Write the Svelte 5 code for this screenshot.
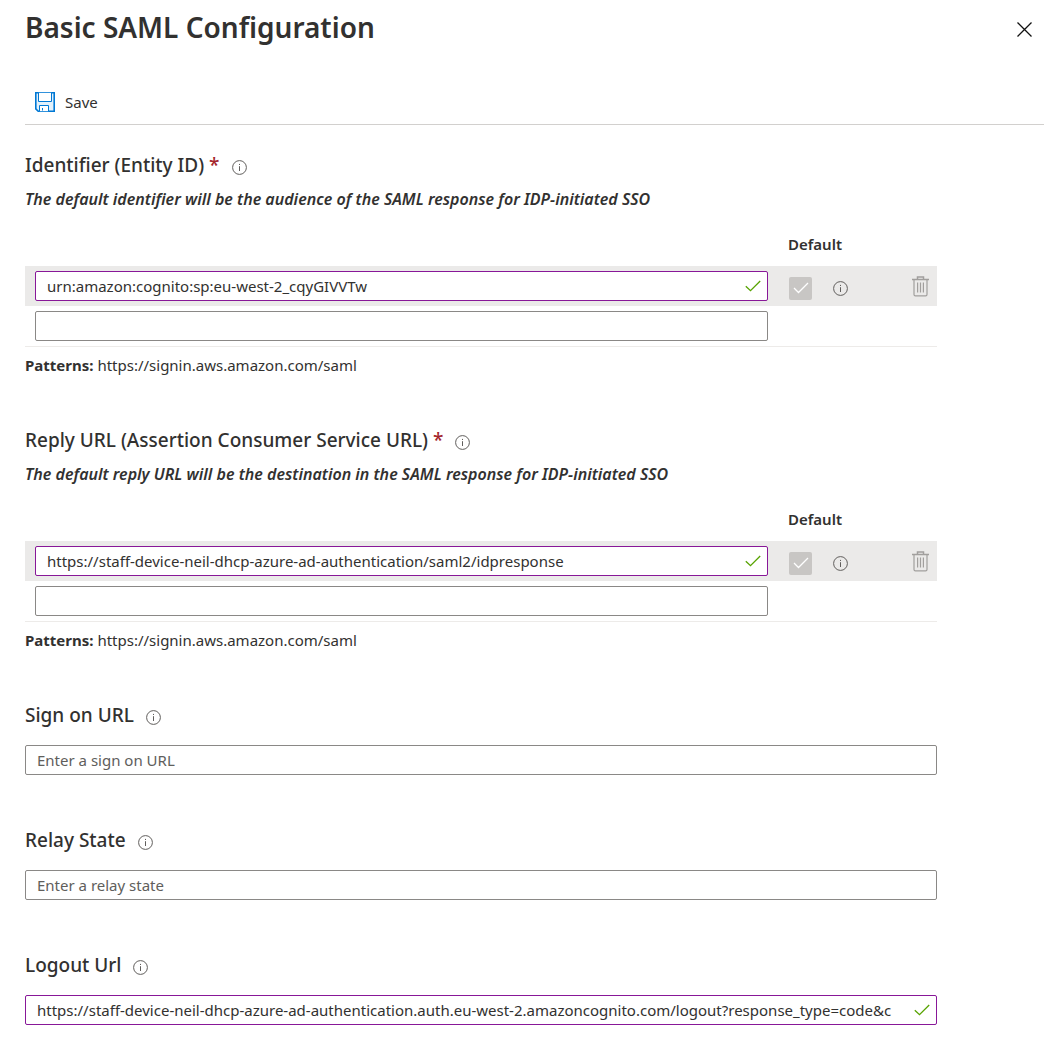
<script>
  const urlLists = [
    {
      id: 'identifier',
      title: 'Identifier (Entity ID)',
      hint: 'The default identifier will be the audience of the SAML response for IDP-initiated SSO',
      value: 'urn:amazon:cognito:sp:eu-west-2_cqyGIVVTw',
    },
    {
      id: 'reply',
      title: 'Reply URL (Assertion Consumer Service URL)',
      hint: 'The default reply URL will be the destination in the SAML response for IDP-initiated SSO',
      value: 'https://staff-device-neil-dhcp-azure-ad-authentication/saml2/idpresponse',
    },
  ];
  const pattern = 'https://signin.aws.amazon.com/saml';

  const fields = [
    { id: 'signon', title: 'Sign on URL', placeholder: 'Enter a sign on URL', value: '' },
    { id: 'relay', title: 'Relay State', placeholder: 'Enter a relay state', value: '' },
    {
      id: 'logout',
      title: 'Logout Url',
      placeholder: 'Enter a logout url',
      value:
        'https://staff-device-neil-dhcp-azure-ad-authentication.auth.eu-west-2.amazoncognito.com/logout?response_type=code&c',
    },
  ];
</script>

{#snippet info()}
  <button class="icon info" type="button" aria-label="More information">
    <svg width="15" height="15" viewBox="0 0 15 15" fill="none" stroke="#605e5c">
      <circle cx="7.5" cy="7.5" r="6.9" />
      <path d="M7.5 6.2V11M7.5 3.9V5" />
    </svg>
  </button>
{/snippet}

{#snippet tick()}
  <svg class="tick" width="16" height="12" viewBox="0 0 16 12" fill="none" stroke="#57a300" stroke-width="1.3">
    <path d="M.8 6.2L5.5 10.7L15.2 1" />
  </svg>
{/snippet}

<main>
  <header>
    <h1>Basic SAML Configuration</h1>
    <button class="icon close" type="button" aria-label="Close">
      <svg width="15" height="15" viewBox="0 0 15 15" fill="none" stroke="#111" stroke-width="1.3">
        <path d="M.5 .5L14.5 14.5M14.5 .5L.5 14.5" />
      </svg>
    </button>
  </header>

  <div class="toolbar">
    <button class="save" type="button">
      <svg width="20" height="20" viewBox="0 0 20 20" fill="none">
        <path d="M.8 .8H19.2V19.2H3.2L.8 16.8Z" fill="#e3f1fb" stroke="#0078d4" stroke-width="1.6" />
        <path d="M3.5 .8V9.5H16.5V.8" fill="#fff" stroke="#0078d4" />
        <path d="M4.5 19.2V13.5H13.5V19.2" fill="#fff" stroke="#0078d4" />
        <path d="M7.5 18.5V16" stroke="#0078d4" />
      </svg>
      Save
    </button>
  </div>

  <form>
    {#each urlLists as list (list.id)}
      <section>
        <div class="heading">
          <h2>{list.title} <span class="required">*</span></h2>
          {@render info()}
        </div>
        <p class="hint">{list.hint}</p>
        <table>
          <colgroup>
            <col />
            <col class="default-col" />
            <col class="delete-col" />
          </colgroup>
          <thead>
            <tr>
              <td></td>
              <th scope="col">Default</th>
              <td></td>
            </tr>
          </thead>
          <tbody>
            <tr class="selected">
              <td class="entry">
                <div class="field">
                  <input class="text valid" type="text" value={list.value} aria-label={list.title} />
                  {@render tick()}
                </div>
              </td>
              <td class="default">
                <div class="default-cell">
                  <input class="check" type="checkbox" checked disabled aria-label="Default" />
                  {@render info()}
                </div>
              </td>
              <td class="delete">
                <button class="icon" type="button" aria-label="Delete">
                  <svg width="17" height="21" viewBox="0 0 17 21" fill="none" stroke="#a19f9d" stroke-width="1.2">
                    <path d="M0 3.5H17M5.5 3.5V1H11.5V3.5" stroke-width="1.5" />
                    <path d="M2 3.6V18.4Q2 19.8 3.4 19.8H13.6Q15 19.8 15 18.4V3.6" />
                    <path d="M5.6 6.5V16.5M8.5 6.5V16.5M11.4 6.5V16.5" />
                  </svg>
                </button>
              </td>
            </tr>
            <tr>
              <td class="entry">
                <div class="field">
                  <input class="text" type="text" aria-label="Add {list.title}" />
                </div>
              </td>
              <td></td>
              <td></td>
            </tr>
          </tbody>
        </table>
        <p class="patterns"><strong>Patterns:</strong> {pattern}</p>
      </section>
    {/each}

    {#each fields as field (field.id)}
      <section>
        <div class="heading">
          <h2><label for={field.id}>{field.title}</label></h2>
          {@render info()}
        </div>
        <div class="field single">
          <input
            id={field.id}
            class="text"
            class:valid={field.value}
            type="text"
            placeholder={field.placeholder}
            value={field.value}
          />
          {#if field.value}{@render tick()}{/if}
        </div>
      </section>
    {/each}
  </form>
</main>

<style>
  :global(body) {
    margin: 0;
    background: #fff;
  }

  main {
    padding: 7px 11px 32px 25px;
    color: #323130;
    font: 15px/20px 'Segoe UI', 'Noto Sans', 'Open Sans', sans-serif;
  }

  main * {
    box-sizing: border-box;
  }

  h1,
  h2,
  p {
    margin: 0;
  }

  button {
    padding: 0;
    border: 0;
    background: none;
    color: inherit;
    font: inherit;
    cursor: pointer;
  }

  svg {
    display: block;
    flex: none;
  }

  header {
    display: flex;
    align-items: center;
    justify-content: space-between;
    padding-right: 12px;
  }

  .close {
    padding-top: 4px;
  }

  h1 {
    font-size: 28px;
    line-height: 40px;
    font-weight: 600;
  }

  .toolbar {
    display: flex;
    align-items: center;
    height: 45px;
    margin-top: 33px;
    padding-left: 10px;
    border-bottom: 1px solid #d2d0ce;
  }

  .save {
    display: flex;
    align-items: center;
    gap: 10px;
  }

  form {
    display: flex;
    flex-direction: column;
    gap: 51px;
    padding: 26px 107px 0 0;
  }

  .heading {
    display: flex;
    align-items: center;
    gap: 12px;
  }

  h2 {
    font-size: 19px;
    line-height: 28px;
    font-weight: 500;
  }

  .info {
    padding-top: 4px;
  }

  .required {
    color: #a4262c;
  }

  .hint {
    margin-top: 10px;
    font-size: 16px;
    font-weight: 600;
    font-style: italic;
  }

  table {
    width: 100%;
    margin-top: 25px;
    border-collapse: collapse;
    table-layout: fixed;
    border-bottom: 1px solid #edebe9;
  }

  .default-col {
    width: 109px;
  }

  .delete-col {
    width: 60px;
  }

  th,
  td {
    padding: 0;
  }

  th {
    padding: 0 0 12px 20px;
    text-align: left;
    font-weight: 600;
  }

  .selected {
    background: #ebeae9;
  }

  .entry {
    padding: 5px 0 5px 10px;
  }

  .field {
    position: relative;
  }

  .text {
    display: block;
    width: 100%;
    height: 30px;
    padding: 0 22px 0 11px;
    border: 1px solid #8a8886;
    border-radius: 2px;
    background: #fff;
    color: #323130;
    font: inherit;
    outline: 0;
  }

  .text::placeholder {
    color: #605e5c;
    opacity: 1;
  }

  .valid {
    border-color: #881798;
  }

  .tick {
    position: absolute;
    top: 9px;
    right: 7px;
  }

  .default {
    padding-left: 21px;
  }

  .default-cell {
    display: flex;
    align-items: center;
    gap: 21px;
    padding-top: 4px;
  }

  .default-cell .info {
    padding: 0;
  }

  .check {
    appearance: none;
    width: 23px;
    height: 23px;
    margin: 0;
    border-radius: 2px;
    background: #c8c6c4
      url("data:image/svg+xml,%3Csvg xmlns='http://www.w3.org/2000/svg' width='16' height='12' fill='none' stroke='white' stroke-width='1.3'%3E%3Cpath d='M1 6L5.5 10.5L15 1'/%3E%3C/svg%3E")
      center no-repeat;
  }

  .delete .icon {
    display: block;
    margin: 0 8px 0 auto;
  }

  .patterns {
    margin-top: 8px;
  }

  .patterns strong {
    font-weight: 700;
  }

  .single {
    margin-top: 16px;
  }
</style>
